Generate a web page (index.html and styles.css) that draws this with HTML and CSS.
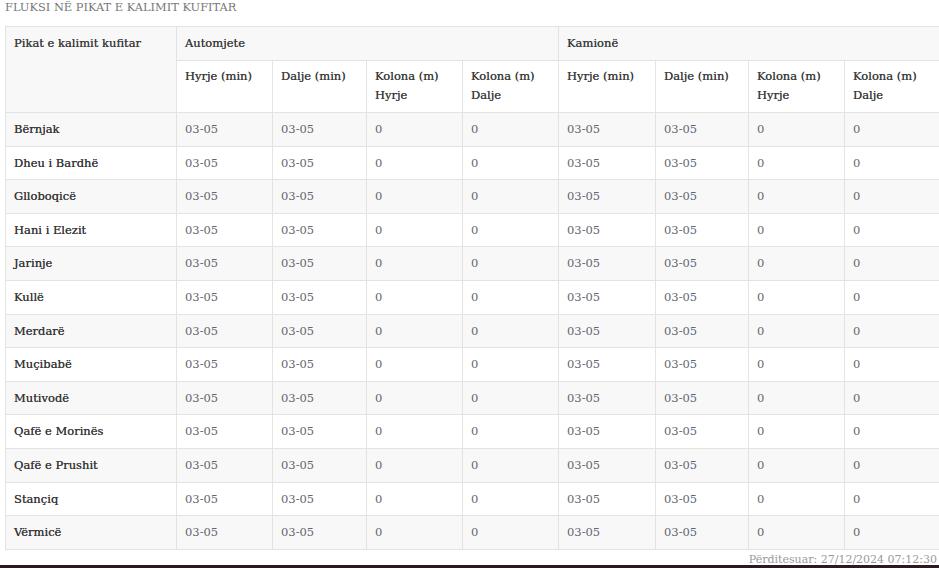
FILE: index.html
```html
<!DOCTYPE html>
<html lang="sq">
<head>
<meta charset="utf-8">
<title>Fluksi në pikat e kalimit kufitar</title>
<link rel="stylesheet" href="styles.css">
</head>
<body>
<div class="page">
  <h2 class="title">FLUKSI NË PIKAT E KALIMIT KUFITAR</h2>
  <div class="table-wrap">
    <table class="flux">
      <colgroup>
        <col class="c-name"><col class="c96"><col class="c94"><col class="c96"><col class="c96"><col class="c97"><col class="c93"><col class="c96"><col class="c96">
      </colgroup>
      <thead>
        <tr>
          <th rowspan="2" class="name-h">Pikat e kalimit kufitar</th>
          <th colspan="4">Automjete</th>
          <th colspan="4">Kamionë</th>
        </tr>
        <tr class="sub">
          <th>Hyrje (min)</th><th>Dalje (min)</th><th>Kolona (m)<br>Hyrje</th><th>Kolona (m)<br>Dalje</th>
          <th>Hyrje (min)</th><th>Dalje (min)</th><th>Kolona (m)<br>Hyrje</th><th>Kolona (m)<br>Dalje</th>
        </tr>
      </thead>
      <tbody>
        <tr><th>Bërnjak</th><td>03-05</td><td>03-05</td><td>0</td><td>0</td><td>03-05</td><td>03-05</td><td>0</td><td>0</td></tr>
        <tr><th>Dheu i Bardhë</th><td>03-05</td><td>03-05</td><td>0</td><td>0</td><td>03-05</td><td>03-05</td><td>0</td><td>0</td></tr>
        <tr><th>Glloboqicë</th><td>03-05</td><td>03-05</td><td>0</td><td>0</td><td>03-05</td><td>03-05</td><td>0</td><td>0</td></tr>
        <tr><th>Hani i Elezit</th><td>03-05</td><td>03-05</td><td>0</td><td>0</td><td>03-05</td><td>03-05</td><td>0</td><td>0</td></tr>
        <tr><th>Jarinje</th><td>03-05</td><td>03-05</td><td>0</td><td>0</td><td>03-05</td><td>03-05</td><td>0</td><td>0</td></tr>
        <tr><th>Kullë</th><td>03-05</td><td>03-05</td><td>0</td><td>0</td><td>03-05</td><td>03-05</td><td>0</td><td>0</td></tr>
        <tr><th>Merdarë</th><td>03-05</td><td>03-05</td><td>0</td><td>0</td><td>03-05</td><td>03-05</td><td>0</td><td>0</td></tr>
        <tr><th>Muçibabë</th><td>03-05</td><td>03-05</td><td>0</td><td>0</td><td>03-05</td><td>03-05</td><td>0</td><td>0</td></tr>
        <tr><th>Mutivodë</th><td>03-05</td><td>03-05</td><td>0</td><td>0</td><td>03-05</td><td>03-05</td><td>0</td><td>0</td></tr>
        <tr><th>Qafë e Morinës</th><td>03-05</td><td>03-05</td><td>0</td><td>0</td><td>03-05</td><td>03-05</td><td>0</td><td>0</td></tr>
        <tr><th>Qafë e Prushit</th><td>03-05</td><td>03-05</td><td>0</td><td>0</td><td>03-05</td><td>03-05</td><td>0</td><td>0</td></tr>
        <tr><th>Stançiq</th><td>03-05</td><td>03-05</td><td>0</td><td>0</td><td>03-05</td><td>03-05</td><td>0</td><td>0</td></tr>
        <tr><th>Vërmicë</th><td>03-05</td><td>03-05</td><td>0</td><td>0</td><td>03-05</td><td>03-05</td><td>0</td><td>0</td></tr>
      </tbody>
    </table>
  </div>
  <p class="updated">Përditesuar: 27/12/2024 07:12:30</p>
</div>
<div class="bottom-bar"></div>
</body>
</html>
```

FILE: styles.css
```css
html, body {
  margin: 0;
  padding: 0;
  background: #fff;
  overflow: hidden;
}
body {
  font-family: "DejaVu Serif", "Liberation Serif", serif;
  color: #555;
  width: 939px;
  height: 568px;
  position: relative;
}
.page {
  padding: 0 2px 0 5px;
}
.title {
  margin: 0;
  height: 26px;
  font-size: 11.4px;
  font-weight: normal;
  color: #777;
  line-height: 15px;
}
.table-wrap {
  width: 935px;
}
.flux {
  border-collapse: collapse;
  table-layout: fixed;
  width: 935px;
  border: 1px solid #e3e3e3;
}
.c-name { width: 171px; }
.c96 { width: 96px; }
.c94 { width: 94px; }
.c97 { width: 97px; }
.c93 { width: 93px; }
.flux th, .flux td {
  border: 1px solid #e3e3e3;
  padding: 7px 8px;
  text-align: left;
  vertical-align: top;
  font-size: 11.5px;
}
.flux thead th {
  font-weight: normal;
  color: #3f3f3f;
  line-height: 19px;
  background: #f8f8f8;
  text-shadow: 0 0 0.4px #3f3f3f;
}
.flux thead .sub th {
  background: #fff;
  padding-top: 6px;
  padding-bottom: 7px;
}
.flux tbody th {
  font-weight: normal;
  color: #3a3a3a;
  line-height: 18.6px;
  text-shadow: 0 0 0.4px #3a3a3a;
}
.flux tbody td {
  color: #5f6670;
  line-height: 18.6px;
  font-weight: normal;
}
.flux tbody tr:nth-child(odd) th,
.flux tbody tr:nth-child(odd) td {
  background: #f8f8f8;
}
.updated {
  margin: 0;
  text-align: right;
  font-size: 11px;
  color: #9a9a9a;
  line-height: 16px;
  padding-top: 2px;
}
.bottom-bar {
  position: absolute;
  left: 0;
  right: 0;
  bottom: 0;
  height: 3px;
  background: #2b1a21;
}
```
